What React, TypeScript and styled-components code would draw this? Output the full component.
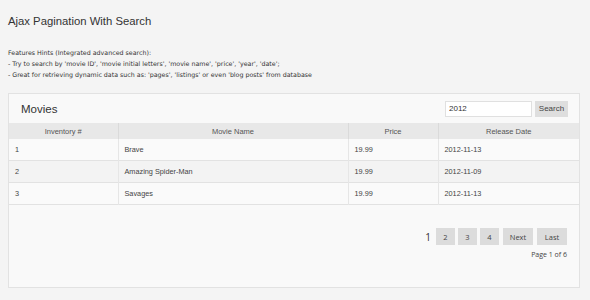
import React from "react"
import styled, { createGlobalStyle } from "styled-components"

const GlobalStyle = createGlobalStyle`
  body {
    margin: 0;
    background: #f4f4f4;
    font-family: "Liberation Sans", Arial, sans-serif;
    color: #333;
  }
`

type Movie = { id: number; name: string; price: string; date: string }

const movies: Movie[] = [
  { id: 1, name: "Brave", price: "19.99", date: "2012-11-13" },
  { id: 2, name: "Amazing Spider-Man", price: "19.99", date: "2012-11-09" },
  { id: 3, name: "Savages", price: "19.99", date: "2012-11-13" },
]

const pages = ["2", "3", "4", "Next", "Last"]

export default function App() {
  return (
    <S.Page>
      <GlobalStyle />
      <S.Title>Ajax Pagination With Search</S.Title>
      <S.Hints>
        <div>Features Hints (Integrated advanced search):</div>
        <div>- Try to search by 'movie ID', 'movie initial letters', 'movie name', 'price', 'year', 'date';</div>
        <div>- Great for retrieving dynamic data such as: 'pages', 'listings' or even 'blog posts' from database</div>
      </S.Hints>
      <S.Panel>
        <S.PanelHeader>
          <S.PanelTitle>Movies</S.PanelTitle>
          <S.SearchBox>
            <S.SearchInput defaultValue="2012" />
            <S.SearchButton>Search</S.SearchButton>
          </S.SearchBox>
        </S.PanelHeader>
        <S.Table>
          <colgroup>
            <col style={{ width: 109 }} />
            <col style={{ width: 230 }} />
            <col style={{ width: 90 }} />
            <col />
          </colgroup>
          <thead>
            <tr>
              <S.Th>Inventory #</S.Th>
              <S.Th>Movie Name</S.Th>
              <S.Th>Price</S.Th>
              <S.Th>Release Date</S.Th>
            </tr>
          </thead>
          <tbody>
            {movies.map((m, i) => (
              <S.Row key={m.id} odd={i % 2 === 1}>
                <S.Td>{m.id}</S.Td>
                <S.Td>{m.name}</S.Td>
                <S.Td>{m.price}</S.Td>
                <S.Td>{m.date}</S.Td>
              </S.Row>
            ))}
          </tbody>
        </S.Table>
        <S.Footer>
          <S.Pager>
            <S.Current>1</S.Current>
            {pages.map((p) => (
              <S.PageButton key={p} wide={p.length > 1}>{p}</S.PageButton>
            ))}
          </S.Pager>
          <S.PageInfo>Page 1 of 6</S.PageInfo>
        </S.Footer>
      </S.Panel>
    </S.Page>
  )
}

const S = {
  Page: styled.div`
    width: 590px;
    height: 300px;
    padding: 15px 10px 0 8px;
    box-sizing: border-box;
    overflow: hidden;
  `,
  Title: styled.h1`
    margin: 0;
    font-size: 11.3px;
    font-weight: normal;
    line-height: 13px;
    color: #333;
  `,
  Hints: styled.div`
    margin-top: 19px;
    font-family: "DejaVu Sans", Verdana, sans-serif;
    font-size: 6.3px;
    line-height: 11px;
    color: #333;
  `,
  Panel: styled.div`
    margin-top: 13px;
    height: 195px;
    box-sizing: border-box;
    border: 1px solid #e2e2e2;
    background: #f9f9f9;
    display: flex;
    flex-direction: column;
  `,
  PanelHeader: styled.div`
    height: 29px;
    display: flex;
    align-items: center;
    justify-content: space-between;
    padding: 0 11px 0 12px;
  `,
  PanelTitle: styled.h2`
    margin: 0;
    font-size: 11.5px;
    font-weight: normal;
    color: #333;
  `,
  SearchBox: styled.div`
    display: flex;
    gap: 3px;
  `,
  SearchInput: styled.input`
    width: 87px;
    height: 16px;
    box-sizing: border-box;
    border: 1px solid #e0e0e0;
    background: #fff;
    padding: 0 3px;
    font-family: "Liberation Sans", Arial, sans-serif;
    font-size: 8px;
    color: #333;
    outline: none;
  `,
  SearchButton: styled.button`
    width: 33px;
    height: 16px;
    border: none;
    background: #dedede;
    padding: 0;
    font-family: "Liberation Sans", Arial, sans-serif;
    font-size: 8px;
    color: #444;
  `,
  Table: styled.table`
    width: 100%;
    border-collapse: collapse;
    table-layout: fixed;
    font-size: 7.3px;
  `,
  Th: styled.th`
    height: 16px;
    padding: 0;
    background: #e8e8e8;
    font-weight: normal;
    font-size: 7.5px;
    color: #555;
    text-align: center;
    & + & {
      border-left: 1px solid #dadada;
    }
  `,
  Row: styled.tr<{ odd: boolean }>`
    background: ${({ odd }) => (odd ? "#f3f3f3" : "#fafafa")};
    border-bottom: 1px solid #e2e2e2;
  `,
  Td: styled.td`
    height: 21px;
    padding: 0 6px;
    color: #444;
    & + & {
      border-left: 1px solid #e6e6e6;
    }
  `,
  Footer: styled.div`
    display: flex;
    flex-direction: column;
    align-items: flex-end;
    padding: 23px 12px 0 0;
    font-family: "Open Sans", sans-serif;
  `,
  Pager: styled.div`
    display: flex;
    align-items: center;
    gap: 3px;
  `,
  Current: styled.span`
    font-size: 10px;
    color: #333;
    margin-right: 2px;
  `,
  PageButton: styled.span<{ wide: boolean }>`
    display: flex;
    align-items: center;
    justify-content: center;
    height: 17px;
    width: ${({ wide }) => (wide ? "30px" : "19px")};
    margin-left: ${({ wide }) => (wide ? "1px" : "0")};
    background: #dcdcdc;
    font-size: 7.5px;
    color: #444;
  `,
  PageInfo: styled.div`
    margin-top: 5px;
    font-size: 7px;
    color: #444;
  `,
}
